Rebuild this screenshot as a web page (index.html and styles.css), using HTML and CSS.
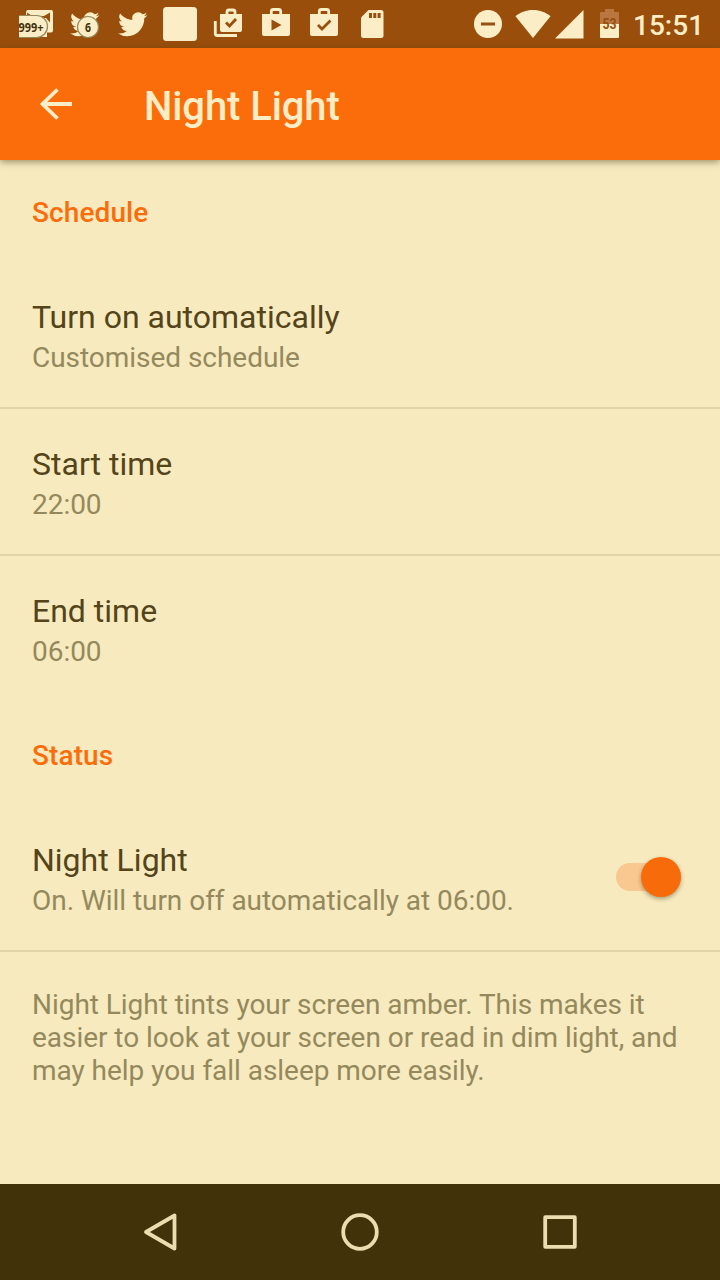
FILE: index.html
```html
<!DOCTYPE html>
<html lang="en">
<head>
    <meta charset="UTF-8">
    <meta name="viewport" content="width=device-width, initial-scale=1.0">
    <title>Night Light</title>
    <link rel="stylesheet" href="styles.css">
</head>
<body>
    <div class="screen">
        <div class="status-bar">
            <div class="notifications">
                <svg width="48" height="48" viewBox="0 0 48 48">
                    <path class="light" d="M15 10h24a2 2 0 0 1 2 2v18.500a2 2 0 0 1-2 2h-4V37H14V12z"/>
                    <path class="cut" d="M15 12.500l5 3.500h12l6-3.500v10l-4-4.500H15z"/>
                    <path class="badge" d="M7 15.500h17.500a11 11 0 0 1 0 22H7"/>
                    <text class="badge-text" x="6.500" y="31.800" textLength="25" lengthAdjust="spacingAndGlyphs">999+</text>
                </svg>
                <svg width="48" height="48" viewBox="0 0 48 48">
                    <path class="light" transform="translate(10.500 9.200) scale(1.220)" d="M23.600 4.900a10 10 0 0 1-2.800.8 4.900 4.900 0 0 0 2.100-2.700c-1 .6-2 1-3.100 1.200a4.900 4.900 0 0 0-8.400 4.500C7.400 8.500 3.700 6.500 1.300 3.500a4.900 4.900 0 0 0 1.500 6.600c-.8 0-1.600-.3-2.200-.6a4.900 4.900 0 0 0 3.900 4.900c-.7.2-1.500.2-2.200.1a4.900 4.900 0 0 0 4.600 3.400A9.900 9.900 0 0 1-.4 19.900a14 14 0 0 0 7.500 2.200c9.100 0 14.300-7.700 14-14.600 1-.7 1.800-1.600 2.500-2.600z"/>
                    <circle class="badge" cx="28" cy="27" r="10.500"/>
                    <text class="badge-text" x="25" y="31.500" textLength="6" lengthAdjust="spacingAndGlyphs">6</text>
                </svg>
                <svg width="48" height="48" viewBox="0 0 48 48">
                    <path class="light" transform="translate(10.500 9.200) scale(1.220)" d="M23.600 4.900a10 10 0 0 1-2.800.8 4.900 4.900 0 0 0 2.100-2.700c-1 .6-2 1-3.100 1.200a4.900 4.900 0 0 0-8.400 4.500C7.400 8.500 3.700 6.500 1.300 3.500a4.900 4.900 0 0 0 1.500 6.600c-.8 0-1.600-.3-2.200-.6a4.900 4.900 0 0 0 3.900 4.900c-.7.2-1.500.2-2.200.1a4.900 4.900 0 0 0 4.600 3.400A9.900 9.900 0 0 1-.4 19.900a14 14 0 0 0 7.500 2.200c9.100 0 14.300-7.700 14-14.600 1-.7 1.800-1.600 2.500-2.600z"/>
                </svg>
                <svg width="48" height="48" viewBox="0 0 48 48">
                    <rect class="light" x="7" y="7" width="34" height="34" rx="3.500"/>
                </svg>
                <svg width="48" height="48" viewBox="0 0 48 48">
                    <path class="line" d="M23 14v-2a2 2 0 0 1 2-2h4a2 2 0 0 1 2 2v2M11.300 21v12.500a2 2 0 0 0 2 2H33"/>
                    <path class="light" d="M16 14h22v16a2 2 0 0 1-2 2H18a2 2 0 0 1-2-2z"/>
                    <path class="tick" d="M22 22.500l3.500 3.500 6.500-7"/>
                </svg>
                <svg width="48" height="48" viewBox="0 0 48 48">
                    <path class="line" d="M19.300 14v-2.500a2 2 0 0 1 2-2h5.400a2 2 0 0 1 2 2V14"/>
                    <path class="light" d="M10 14h28v20a2 2 0 0 1-2 2H12a2 2 0 0 1-2-2z"/>
                    <path class="cut" d="M19.500 19.500v11l10-5.500z"/>
                </svg>
                <svg width="48" height="48" viewBox="0 0 48 48">
                    <path class="line" d="M19.300 14v-2.500a2 2 0 0 1 2-2h5.400a2 2 0 0 1 2 2V14"/>
                    <path class="light" d="M10 14h28v20a2 2 0 0 1-2 2H12a2 2 0 0 1-2-2z"/>
                    <path class="tick" d="M18 25l4 4 8.500-8.500"/>
                </svg>
                <svg width="48" height="48" viewBox="0 0 48 48">
                    <path class="light" d="M20.500 10H33a2.500 2.500 0 0 1 2.500 2.500v23A2.500 2.500 0 0 1 33 38H15.500a2.500 2.500 0 0 1-2.500-2.500V17.500z"/>
                    <path class="cut" d="M21 13h3v5h-3zM25.300 13h3v5h-3zM29.600 13h3v5h-3z"/>
                </svg>
            </div>
            <div class="system">
                <svg width="28" height="48" viewBox="0 0 28 48">
                    <circle class="light" cx="14" cy="24" r="14"/>
                    <path class="cut" d="M7 22.500h14v3H7z"/>
                </svg>
                <svg class="wifi" width="36" height="48" viewBox="0 0 36 48">
                    <path class="light" d="M18 38L.5 16.200C5 12.500 11 10 18 10s13 2.500 17.500 6.200z"/>
                </svg>
                <svg class="signal" width="29" height="48" viewBox="0 0 29 48">
                    <path class="light" d="M0 38.500L28.500 10v28.500z"/>
                </svg>
                <svg class="battery" width="19" height="48" viewBox="0 0 19 48">
                    <path class="faded" d="M5 9h9v3h4a1 1 0 0 1 1 1v11H0V13a1 1 0 0 1 1-1h4z"/>
                    <path class="light" d="M0 24h19v13a1 1 0 0 1-1 1H1a1 1 0 0 1-1-1z"/>
                    <text class="battery-text" x="2.500" y="28.500" textLength="14" lengthAdjust="spacingAndGlyphs">53</text>
                </svg>
                <span class="clock">15:51</span>
            </div>
        </div>

        <header class="toolbar">
            <svg class="back" width="32" height="32" viewBox="0 0 32 32">
                <path d="M32 16H4M17.500 1.500L2.500 16l15 14.500"/>
            </svg>
            <h1>Night Light</h1>
        </header>

        <main class="content">
            <h2>Schedule</h2>
            <div class="row">
                <div>
                    <h3>Turn on automatically</h3>
                    <p>Customised schedule</p>
                </div>
            </div>
            <div class="row">
                <div>
                    <h3>Start time</h3>
                    <p>22:00</p>
                </div>
            </div>
            <div class="row last">
                <div>
                    <h3>End time</h3>
                    <p>06:00</p>
                </div>
            </div>

            <h2>Status</h2>
            <div class="row">
                <div>
                    <h3>Night Light</h3>
                    <p>On. Will turn off automatically at 06:00.</p>
                </div>
                <div class="switch">
                    <div class="thumb"></div>
                </div>
            </div>
            <p class="info">Night Light tints your screen amber. This makes it easier to look at your screen or read in dim light, and may help you fall asleep more easily.</p>
        </main>

        <nav class="nav-bar">
            <svg width="200" height="96" viewBox="0 0 200 96">
                <path d="M114.500 31.500v33L86 48z"/>
            </svg>
            <svg width="200" height="96" viewBox="0 0 200 96">
                <circle cx="100" cy="48" r="16.800"/>
            </svg>
            <svg width="200" height="96" viewBox="0 0 200 96">
                <rect x="85.200" y="33.200" width="29.600" height="29.600"/>
            </svg>
        </nav>
    </div>
</body>
</html>
```
FILE: styles.css
```css
* {
    box-sizing: border-box;
}
body {
    margin: 0;
    font-family: Roboto, sans-serif;
    background-color: #f7eabf;
}
h1, h2, h3, p {
    margin: 0;
}
svg {
    display: block;
    flex-shrink: 0;
}
.screen {
    display: flex;
    flex-direction: column;
    width: 720px;
    height: 1280px;
}

/* status bar */
.status-bar {
    display: flex;
    justify-content: space-between;
    height: 48px;
    padding: 0 17px 0 12px;
    background-color: #994e0c;
}
.notifications, .system {
    display: flex;
}
.light {
    fill: #fbedc5;
}
.cut {
    fill: #994e0c;
}
.faded {
    fill: #b9773f;
}
.line {
    fill: none;
    stroke: #fbedc5;
    stroke-width: 2.8;
}
.tick {
    fill: none;
    stroke: #994e0c;
    stroke-width: 2.8;
}
.badge {
    fill: #fbedc5;
    stroke: #94895c;
    stroke-width: 1.2;
}
.badge-text {
    font: bold 12px "Noto Sans", sans-serif;
    fill: #43330b;
}
.battery-text {
    font: bold 14px Roboto, sans-serif;
    fill: #994e0c;
}
.wifi {
    margin-left: 13px;
}
.signal {
    margin-left: 4px;
}
.battery {
    margin-left: 16px;
}
.clock {
    width: 70px;
    margin-left: 14px;
    font-size: 28px;
    font-weight: 500;
    line-height: 51px;
    color: #fbedc5;
    white-space: nowrap;
}

/* toolbar */
.toolbar {
    display: flex;
    height: 112px;
    padding: 35px 40px 0;
    background-color: #fb6d0b;
    box-shadow: 0 2px 7px rgba(65, 50, 10, 0.5);
}
.back {
    margin: 5px 72px 0 0;
    fill: none;
    stroke: #fbedc5;
    stroke-width: 3.8;
}
.toolbar h1 {
    font-size: 40px;
    font-weight: 500;
    line-height: 47px;
    letter-spacing: -0.1px;
    color: #fbedc5;
}

/* settings list */
.content {
    flex: 1;
}
.content h2 {
    padding: 36px 32px 33px;
    font-size: 28px;
    font-weight: 500;
    line-height: 33px;
    letter-spacing: 0.1px;
    color: #fb6d0b;
}
.row {
    display: flex;
    justify-content: space-between;
    height: 147px;
    padding: 36px 32px 0;
    border-bottom: 2px solid #e1d5a8;
}
.row.last {
    border-color: transparent;
}
.row h3 {
    margin-bottom: 5px;
    font-size: 32px;
    font-weight: 400;
    line-height: 38px;
    color: #544419;
}
.content p {
    font-size: 28px;
    line-height: 33px;
    letter-spacing: -0.04px;
    color: #94895c;
}
.switch {
    display: flex;
    align-items: center;
    justify-content: flex-end;
    width: 65px;
    height: 28px;
    margin: 22px 7px 0 0;
    border-radius: 14px;
    background-color: #f8c890;
}
.thumb {
    width: 40px;
    height: 40px;
    border-radius: 50%;
    background-color: #f86b0b;
    box-shadow: 0 2px 4px rgba(65, 50, 10, 0.4);
}
.content .info {
    padding: 36px 32px 0;
}

/* navigation bar */
.nav-bar {
    display: flex;
    justify-content: center;
    height: 96px;
    padding: 0 60px;
    background-color: #41320a;
}
.nav-bar svg {
    fill: none;
    stroke: #eaddb0;
    stroke-width: 3.8;
    stroke-linejoin: round;
}
```
